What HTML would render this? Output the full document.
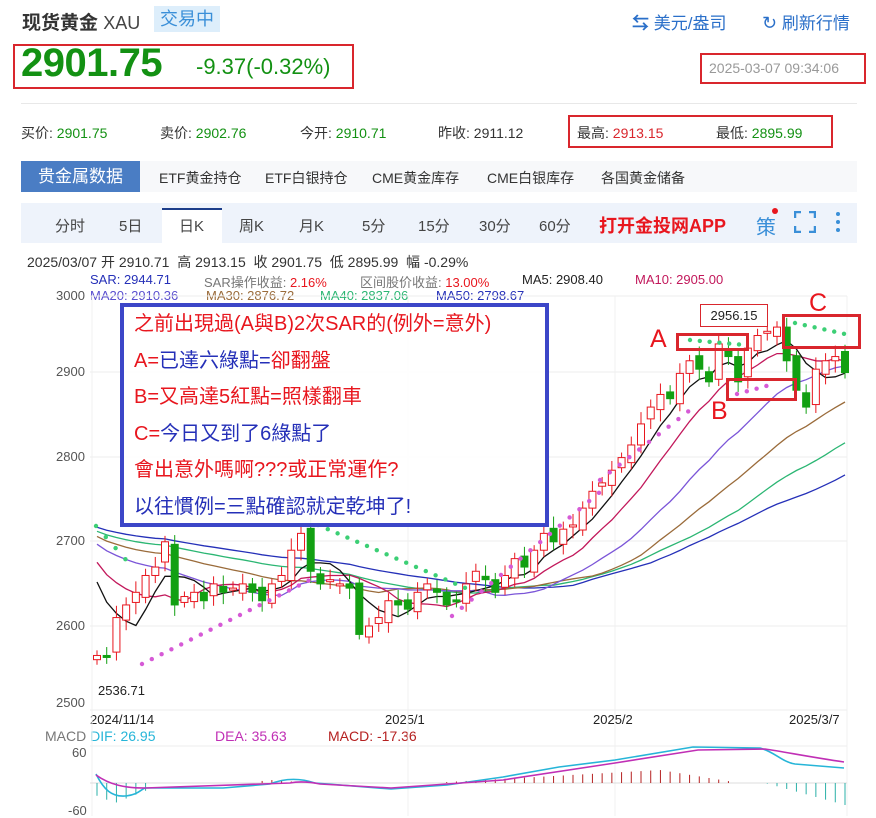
<!DOCTYPE html><html><head><meta charset="utf-8"><style>
body{margin:0;width:876px;height:816px;background:#fff;font-family:"Liberation Sans","Noto Sans CJK SC",sans-serif;position:relative;overflow:hidden;color:#333}
.a{position:absolute;white-space:nowrap}
</style></head><body>
<div class="a" style="left:22px;top:8px;font-size:19px;font-weight:bold;color:#333">现货黄金 <span style="font-weight:normal;font-size:18px;color:#444">XAU</span></div>
<div class="a" style="left:154px;top:6px;width:66px;height:26px;background:#ddeefb;color:#3a8fd8;font-size:18px;line-height:26px;text-align:center">交易中</div>
<div class="a" style="left:632px;top:9px;font-size:17px;color:#2a6fc9"><b>⇆</b> 美元/盎司</div>
<div class="a" style="left:762px;top:9px;font-size:17px;color:#2a6fc9"><span style="font-size:18px">↻</span> 刷新行情</div>
<div class="a" style="left:13px;top:44px;width:337px;height:41px;border:2px solid #d9262d"></div>
<div class="a" style="left:21px;top:41px;font-size:40px;font-weight:bold;color:#139113;letter-spacing:-0.5px">2901.75</div>
<div class="a" style="left:196px;top:54px;font-size:22px;color:#139113">-9.37(-0.32%)</div>
<div class="a" style="left:700px;top:53px;width:162px;height:27px;border:2px solid #d9262d"></div>
<div class="a" style="left:709px;top:60px;font-size:14px;color:#999">2025-03-07 09:34:06</div>
<div class="a" style="left:21px;top:103px;width:836px;height:1px;background:#e8e8e8"></div>
<div class="a" style="left:21px;top:123px;font-size:14px">买价: <span style="color:#139113">2901.75</span></div>
<div class="a" style="left:160px;top:123px;font-size:14px">卖价: <span style="color:#139113">2902.76</span></div>
<div class="a" style="left:300px;top:123px;font-size:14px">今开: <span style="color:#139113">2910.71</span></div>
<div class="a" style="left:438px;top:123px;font-size:14px">昨收: 2911.12</div>
<div class="a" style="left:568px;top:115px;width:261px;height:29px;border:2px solid #d9262d"></div>
<div class="a" style="left:577px;top:123px;font-size:14px">最高: <span style="color:#d9262d">2913.15</span></div>
<div class="a" style="left:716px;top:123px;font-size:14px">最低: <span style="color:#139113">2895.99</span></div>
<div class="a" style="left:21px;top:161px;width:836px;height:31px;background:#f7f8fa"></div>
<div class="a" style="left:21px;top:161px;width:119px;height:31px;background:#4a7dc4;color:#fff;font-size:17px;line-height:31px;text-align:center">贵金属数据</div>
<div class="a" style="left:159px;top:168px;font-size:14px">ETF黄金持仓</div>
<div class="a" style="left:265px;top:168px;font-size:14px">ETF白银持仓</div>
<div class="a" style="left:372px;top:168px;font-size:14px">CME黄金库存</div>
<div class="a" style="left:487px;top:168px;font-size:14px">CME白银库存</div>
<div class="a" style="left:601px;top:168px;font-size:14px">各国黄金储备</div>
<div class="a" style="left:21px;top:203px;width:836px;height:40px;background:#eef3fb"></div>
<div class="a" style="left:162px;top:208px;width:60px;height:35px;background:#fff;border-top:2px solid #1d3e8a"></div>
<div class="a" style="left:55px;top:215px;font-size:15px;color:#444">分时</div>
<div class="a" style="left:119px;top:215px;font-size:15px;color:#444">5日</div>
<div class="a" style="left:179px;top:215px;font-size:15px;color:#444">日K</div>
<div class="a" style="left:239px;top:215px;font-size:15px;color:#444">周K</div>
<div class="a" style="left:299px;top:215px;font-size:15px;color:#444">月K</div>
<div class="a" style="left:362px;top:215px;font-size:15px;color:#444">5分</div>
<div class="a" style="left:418px;top:215px;font-size:15px;color:#444">15分</div>
<div class="a" style="left:479px;top:215px;font-size:15px;color:#444">30分</div>
<div class="a" style="left:539px;top:215px;font-size:15px;color:#444">60分</div>
<div class="a" style="left:599px;top:212px;font-size:18px;font-weight:bold;color:#e8161e">打开金投网APP</div>
<div class="a" style="left:756px;top:211px;font-size:20px;color:#3a8fd8">策</div>
<div class="a" style="left:772px;top:208px;width:6px;height:6px;border-radius:3px;background:#e8161e"></div>
<svg class="a" style="left:794px;top:211px" width="22" height="22"><path d="M1 7V1h6M15 1h6v6M21 15v6h-6M7 21H1v-6" stroke="#3a8fd8" stroke-width="2.5" fill="none"/></svg>
<svg class="a" style="left:834px;top:210px" width="8" height="24"><circle cx="4" cy="4" r="2" fill="#3a8fd8"/><circle cx="4" cy="12" r="2" fill="#3a8fd8"/><circle cx="4" cy="20" r="2" fill="#3a8fd8"/></svg>
<div class="a" style="left:27px;top:252px;font-size:14px;color:#333">2025/03/07 开 2910.71 &nbsp;高 2913.15 &nbsp;收 2901.75 &nbsp;低 2895.99 &nbsp;幅 -0.29%</div>
<div class="a" style="left:90px;top:272px;font-size:13px;color:#2530b8">SAR: 2944.71</div>
<div class="a" style="left:204px;top:272px;font-size:13px;color:#777">SAR操作收益: <span style="color:#e8161e">2.16%</span></div>
<div class="a" style="left:360px;top:272px;font-size:13px;color:#777">区间股价收益: <span style="color:#e8161e">13.00%</span></div>
<div class="a" style="left:522px;top:272px;font-size:13px;color:#222">MA5: 2908.40</div>
<div class="a" style="left:635px;top:272px;font-size:13px;color:#c2185b">MA10: 2905.00</div>
<div class="a" style="left:56px;top:288px;font-size:13px;color:#555">3000</div>
<div class="a" style="left:90px;top:288px;font-size:13px;color:#5a4fcf">MA20: 2910.36</div>
<div class="a" style="left:206px;top:288px;font-size:13px;color:#9a6b3a">MA30: 2876.72</div>
<div class="a" style="left:320px;top:288px;font-size:13px;color:#2bb673">MA40: 2837.06</div>
<div class="a" style="left:436px;top:288px;font-size:13px;color:#2530b8">MA50: 2798.67</div>
<div class="a" style="left:56px;top:364px;font-size:13px;color:#555">2900</div>
<div class="a" style="left:56px;top:449px;font-size:13px;color:#555">2800</div>
<div class="a" style="left:56px;top:533px;font-size:13px;color:#555">2700</div>
<div class="a" style="left:56px;top:618px;font-size:13px;color:#555">2600</div>
<div class="a" style="left:56px;top:695px;font-size:13px;color:#555">2500</div>
<div class="a" style="left:98px;top:683px;font-size:13px;color:#222">2536.71</div>
<div class="a" style="left:90px;top:712px;font-size:13px;color:#222">2024/11/14</div>
<div class="a" style="left:385px;top:712px;font-size:13px;color:#222">2025/1</div>
<div class="a" style="left:593px;top:712px;font-size:13px;color:#222">2025/2</div>
<div class="a" style="left:789px;top:712px;font-size:13px;color:#222">2025/3/7</div>
<div class="a" style="left:45px;top:728px;font-size:14px;color:#777">MACD <span style="color:#26b5d8">DIF: 26.95</span></div>
<div class="a" style="left:215px;top:728px;font-size:14px;color:#c02fb5">DEA: 35.63</div>
<div class="a" style="left:328px;top:728px;font-size:14px;color:#b52020">MACD: -17.36</div>
<div class="a" style="left:72px;top:745px;font-size:13px;color:#555">60</div>
<div class="a" style="left:68px;top:803px;font-size:13px;color:#555">-60</div>
<svg class="a" id="ch" style="left:0;top:0" width="876" height="816"></svg>
<div class="a" style="left:120px;top:303px;width:421px;height:216px;border:4px solid #3c46c8;background:rgba(255,255,255,0.93)"></div>
<div class="a" style="left:134px;top:306px;font-size:20px;line-height:36.5px;color:#e8161e">之前出現過(A與B)2次SAR的(例外=意外)<br>A=<span style="color:#2530b8">已達六綠點=</span>卻翻盤<br>B=又高達5紅點=照樣翻車<br>C=<span style="color:#2530b8">今日又到了6綠點了</span><br>會出意外嗎啊???或正常運作?<br><span style="color:#2530b8">以往慣例=三點確認就定乾坤了!</span></div>
<div class="a" style="left:676px;top:333px;width:67px;height:12px;border:3px solid #d9262d"></div>
<div class="a" style="left:726px;top:378px;width:65px;height:17px;border:3px solid #d9262d"></div>
<div class="a" style="left:782px;top:314px;width:73px;height:29px;border:3px solid #d9262d"></div>
<div class="a" style="left:700px;top:304px;width:66px;height:21px;border:1px solid #d9262d;background:#fff;font-size:13px;line-height:21px;text-align:center;color:#222">2956.15</div>
<div class="a" style="left:650px;top:325px;font-size:25px;color:#e8161e">A</div>
<div class="a" style="left:711px;top:397px;font-size:25px;color:#e8161e">B</div>
<div class="a" style="left:809px;top:289px;font-size:25px;color:#e8161e">C</div>
<script>
var s=document.getElementById('ch'),h='';
function Y(p){return 626-(p-2600)*0.842}
[296,372,457,541,626,710].forEach(function(y){h+='<line x1="90" x2="847" y1="'+y+'" y2="'+y+'" stroke="#eee"/>'});
[92,408,615,847].forEach(function(x){h+='<line x1="'+x+'" x2="'+x+'" y1="296" y2="816" stroke="#f0f0f0"/>'});
h+='<line x1="90" x2="847" y1="746" y2="746" stroke="#eee"/><line x1="90" x2="847" y1="783" y2="783" stroke="#ddd"/>';
var C=[2565,2563,2610,2625,2640,2660,2670,2700,2625,2635,2640,2630,2650,2640,2645,2650,2640,2630,2650,2660,2690,2710,2665,2650,2655,2650,2645,2590,2600,2610,2630,2625,2620,2640,2650,2640,2625,2630,2650,2665,2655,2640,2660,2680,2670,2690,2710,2700,2715,2720,2740,2760,2770,2785,2800,2815,2840,2860,2875,2870,2900,2915,2905,2890,2935,2920,2890,2930,2945,2950,2955,2915,2880,2860,2905,2915,2920,2901];
var H=[];for(var k=0;k<50;k++)H.push(2740-k*0.6-(k>40?(k-40)*5:0));var A=H.concat(C);
var n=C.length,st=(845-97)/(n-1),X=function(i){return 97+i*st};
function ma(k){var p='';for(var i=0;i<n;i++){var a=0;for(var j=i+50-k+1;j<=i+50;j++)a+=A[j];p+=(i?'L':'M')+X(i).toFixed(1)+' '+Y(a/k).toFixed(1)}return p}
[[50,'#2530b8'],[40,'#2bb673'],[30,'#9a6b3a'],[20,'#7b55d8'],[10,'#c2185b'],[5,'#111']].forEach(function(c){h+='<path d="'+ma(c[0])+'" fill="none" stroke="'+c[1]+'" stroke-width="1.3"/>'});
for(var i=0;i<n;i++){var o=i?C[i-1]+((i*7)%5-2)*3:2560,c=C[i],up=c>=o,x=X(i),hi=Math.max(o,c)+6+(i*13)%9,lo=Math.min(o,c)-6-(i*11)%9;var col=up?'#e8161e':'#12a012';
h+='<line x1="'+x+'" x2="'+x+'" y1="'+Y(hi)+'" y2="'+Y(lo)+'" stroke="'+col+'"/>';
var t=Y(Math.max(o,c)),b=Y(Math.min(o,c));if(b-t<2)b=t+2;
h+='<rect x="'+(x-3.5)+'" y="'+t+'" width="7" height="'+(b-t)+'" fill="'+(up?'#fff':col)+'" stroke="'+col+'"/>';}
function dots(x1,x2,y1,y2,c,k){for(var x=x1;x<=x2;x+=k){var y=y1+(y2-y1)*(x-x1)/(x2-x1||1);h+='<circle cx="'+x+'" cy="'+y+'" r="2.2" fill="'+c+'"/>'}}
dots(96,135,526,570,'#3ccf75',9.8);dots(142,310,664,580,'#d65ad6',9.8);dots(318,470,525,590,'#3ccf75',9.8);dots(452,600,616,492,'#d65ad6',9.8);dots(600,690,480,410,'#d65ad6',9.8);dots(690,745,340,345,'#3ccf75',9.8);dots(737,770,394,385,'#d65ad6',9.8);dots(795,845,323,334,'#3ccf75',9.8);
// macd histogram
for(var i=0;i<n;i++){var x=X(i),v=0;
if(x<150)v=-(20-Math.abs(x-115)*0.4);else if(x>250&&x<300)v=3*Math.sin((x-250)/50*3.14);else if(x>430&&x<740)v=(x<660?(x-430)/230*13:13-(x-660)/80*13);else if(x>765)v=-(x-765)/80*22;
if(Math.abs(v)>0.5)h+='<line x1="'+x+'" x2="'+x+'" y1="783" y2="'+(783-v)+'" stroke="'+(v>0?'#b52020':'#2bb0a8')+'"/>'}
h+='<path d="M96 774 C104 790,112 797,125 796 S140 790,145 788 L223 788 L270 784 C285 778,300 778,315 783 L391 789 L447 785 L503 777 L559 767 L615 760 L693 747 L760 748 C775 752,782 762,795 764 L844 768" fill="none" stroke="#26b5d8" stroke-width="1.6"/>';
h+='<path d="M96 775 C110 785,125 788,145 788 L290 783 C300 781,310 782,320 784 L391 788 L503 780 L615 763 L698 750 L765 749 C785 752,810 757,844 762" fill="none" stroke="#c02fb5" stroke-width="1.6"/>';
s.innerHTML=h;
</script>
</body></html>
